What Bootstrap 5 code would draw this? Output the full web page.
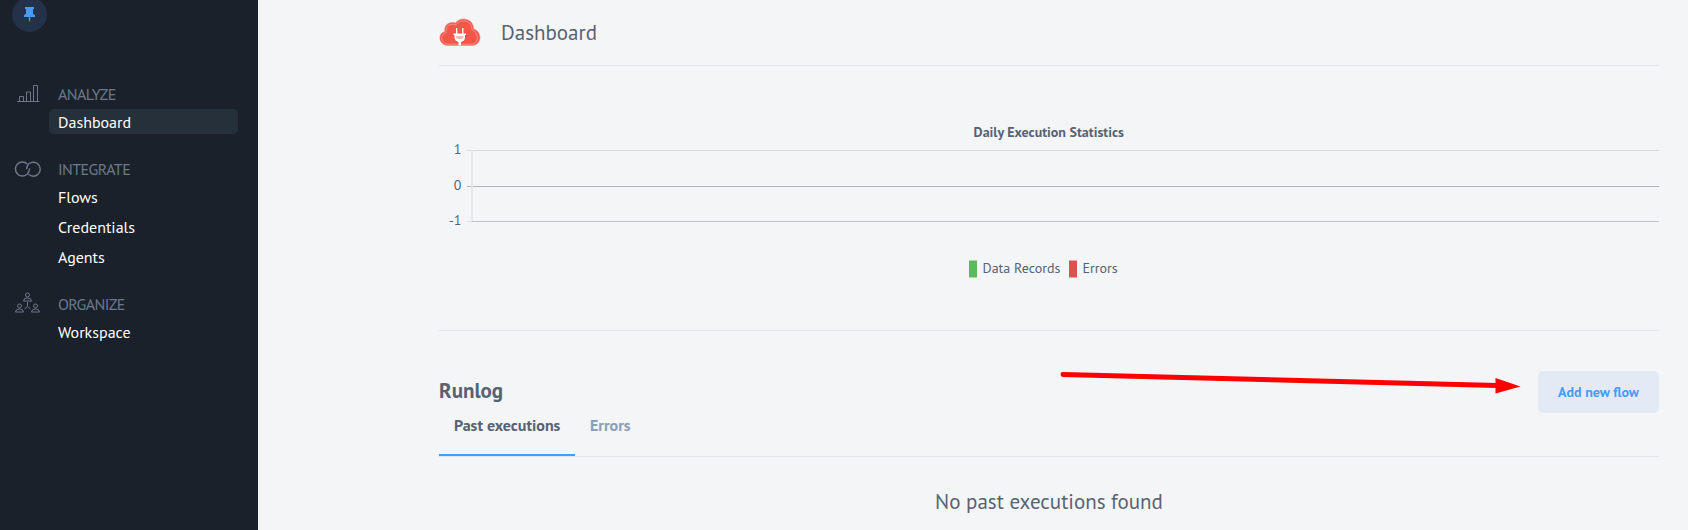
<!DOCTYPE html>
<html lang="en">
<head>
<meta charset="utf-8">
<meta name="viewport" content="width=device-width, initial-scale=1">
<title>Dashboard</title>
<link href="https://cdn.jsdelivr.net/npm/bootstrap@5.3.0/dist/css/bootstrap.min.css" rel="stylesheet">
<style>
  body { font-family: "PT Sans", "Noto Sans", "Open Sans", sans-serif; background: #f4f5f7; color: #566373; height: 530px; overflow: hidden; }
  .sidebar { width: 258px; background: #1b212a; }
  .pin { width: 35px; height: 35px; margin: -3px 0 50px 12px; background: #233248; }
  .menu-group { margin-bottom: 23px; }
  .menu-title { height: 25px; margin-bottom: 2px; color: #6c788a; font-size: 16px; letter-spacing: -.6px; }
  .menu-title svg { width: 58px; height: 28px; flex: none; }
  .menu-title span { padding-bottom: 2px; }
  .side-link { height: 25px; margin: 0 20px 5px 49px; padding-left: 9px; color: #fff; border-radius: 5px; font-size: 16px; }
  .side-link.active { background: #26303b; }
  .content-area { padding: 0 29px 0 181px; }
  .rule { border-bottom: 1px solid #e2e4e7; }
  .page-head { height: 66px; }
  .page-head h1 { font-size: 21px; margin: 0 0 0 20px; }
  .runlog-head { height: 83px; padding-top: 40px; }
  .runlog-head h2 { font-size: 21px; margin: 8px 0 0; line-height: 24px; }
  .btn-flow { width: 121px; height: 42px; background: #e3eaf6; color: #4a9bf5; border-radius: 5px; font-size: 14px; }
  .tab-row { height: 43px; }
  .tab-item { padding: 0 15px; height: 42px; line-height: 22px; font-size: 16px; color: #8b9fba; }
  .tab-item.active { color: #566373; border-bottom: 2px solid #4a9bf5; width: 136px; }
  .none-found { font-size: 21px; margin-top: 29px; line-height: 32px; }
  .pointer { left: 1050px; top: 365px; pointer-events: none; }
</style>
</head>
<body class="d-flex position-relative">
<aside class="sidebar flex-shrink-0">
  <div class="pin rounded-circle d-flex align-items-center justify-content-center">
    <svg width="11" height="15" viewBox="0 0 11 15" fill="#4a9bf5"><path d="M1 0h9v2H9v5l2 1v2H6.200v3l-.7 2-.7-2v-3H0V8l2-1V2H1z"/></svg>
  </div>
  <div class="menu-group">
    <div class="menu-title d-flex align-items-center"><svg viewBox="0 0 58 28" fill="none" stroke="#6c788a"><path d="M17 20.500h22.500M19.500 20v-4.500h4V20M26.500 20v-9h4v9M33.500 20V4.500h4V20"/></svg><span>ANALYZE</span></div>
    <a class="side-link active d-flex align-items-center text-decoration-none" href="#">Dashboard</a>
  </div>
  <div class="menu-group">
    <div class="menu-title d-flex align-items-center"><svg viewBox="0 0 58 28" fill="none" stroke="#6c788a" stroke-width="1.4"><path d="M27 18.300A7 7 0 1 1 27.300 8M28.500 18.300A7 7 0 1 0 28.800 7.800q-2.200 2.200-2.200 5.500M29.600 12.500q0 3.500-2.600 5.800"/></svg><span>INTEGRATE</span></div>
    <a class="side-link d-flex align-items-center text-decoration-none" href="#">Flows</a>
    <a class="side-link d-flex align-items-center text-decoration-none" href="#">Credentials</a>
    <a class="side-link d-flex align-items-center text-decoration-none" href="#">Agents</a>
  </div>
  <div class="menu-group">
    <div class="menu-title d-flex align-items-center"><svg viewBox="0 0 58 28" fill="none" stroke="#6c788a"><g id="person"><circle cx="27.500" cy="4" r="2"/><path d="M23.500 10q0-3 4-3t4 3z"/></g><use href="#person" x="-8" y="11"/><use href="#person" x="8" y="11"/><path d="M27.500 11v4.500l-3 2.500M27.500 15.500l3 2.500"/></svg><span>ORGANIZE</span></div>
    <a class="side-link d-flex align-items-center text-decoration-none" href="#">Workspace</a>
  </div>
</aside>
<main class="content-area flex-grow-1">
  <header class="page-head rule d-flex align-items-center">
    <svg class="mb-1" width="42" height="32" viewBox="0 0 42 32">
      <path d="M9 30.500C-1.500 29.500-1 18 5.700 16.500 5 9 11 6.500 16.500 8c5.500-7.500 18.500-4 18 6 8.500 2 9 15.500-1 16.500z" fill="#f6564a" stroke="#f58a82" stroke-width=".6"/>
      <path d="M9 29.200C1 28 1 19 7.200 17.700 6.200 10.500 12 8 17 9.800 22.500 2.500 33.500 6 33 15c6.500 1.500 7.500 13 .5 14.200z" fill="none" stroke="#fbc4bf" stroke-width=".5"/>
      <path d="M17 13h1.300v5.500h4.900V13h1.300v5.500H27V20h-1v2.500q0 3.500-4 4.500v3.500h-2.500V27q-4-1-4-4.500V20h-1v-1.500H17z" fill="#fff"/>
      <path d="M17 21h7.500v1.500q-1 1.700-3.700 1.700T17 22.500z" fill="#f9b9b4"/>
    </svg>
    <h1 class="fw-normal">Dashboard</h1>
  </header>
  <svg class="rule d-block" width="1220" height="265" viewBox="439 66 1220 264" font-size="14" fill="#566373">
    <path d="M467 150.500H1659" stroke="#d9dbdd"/><path d="M467 186.500H1659" stroke="#b1b3b6"/><path d="M467 221.500h5" stroke="#dcdee0"/><path d="M472 221.500H1659" stroke="#c1c3c6"/><path d="M472 150v71" stroke="#e4e6e8" stroke-width="2"/>
    <text x="461.500" y="154" text-anchor="end">1</text><text x="461.500" y="190" text-anchor="end">0</text><text x="461.500" y="225" text-anchor="end">-1</text>
    <text x="973.600" y="137" font-weight="700">Daily Execution Statistics</text>
    <path d="M969 260.500h8v17h-8z" fill="#5cb85c"/><text x="982.500" y="273">Data Records</text>
    <path d="M1069 260.500h8v17h-8z" fill="#d9534f"/><text x="1082.500" y="273">Errors</text>
  </svg>
  <section>
    <div class="runlog-head d-flex justify-content-between align-items-start"><h2 class="fw-bold">Runlog</h2><button type="button" class="btn btn-flow fw-bold p-0 border-0">Add new flow</button></div>
    <nav class="tab-row rule d-flex"><a class="tab-item active fw-bold text-decoration-none text-nowrap" href="#">Past executions</a><a class="tab-item fw-bold text-decoration-none" href="#">Errors</a></nav>
    <p class="none-found text-center mb-0">No past executions found</p>
  </section>
</main>
<svg class="pointer position-absolute" width="480" height="35" viewBox="1050 365 480 35"><path d="M1063 374.500 1497 385.500" stroke="#f00" stroke-width="5" stroke-linecap="round"/><path d="M1495.500 378 1520.500 386.500 1495.500 393.500z" fill="#f00"/></svg>
<script src="https://cdn.jsdelivr.net/npm/bootstrap@5.3.0/dist/js/bootstrap.bundle.min.js"></script>
</body>
</html>
